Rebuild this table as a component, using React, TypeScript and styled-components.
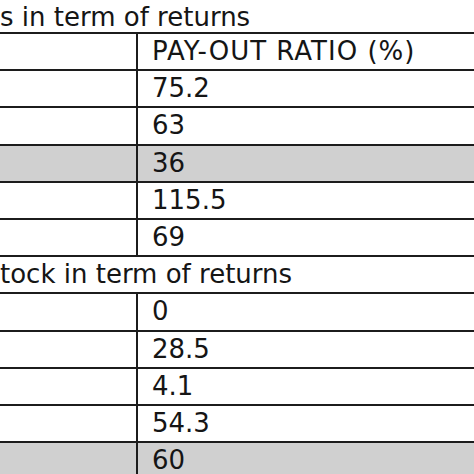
import styled, { createGlobalStyle } from "styled-components";

const GlobalStyle = createGlobalStyle`
  html, body {
    margin: 0;
    padding: 0;
    background: #ffffff;
  }
  body {
    font-family: "DejaVu Sans", Verdana, sans-serif;
    color: #151515;
  }
`;

const Sheet = styled.div`
  width: 474px;
  height: 474px;
  overflow: hidden;
  background: #ffffff;
`;

const CaptionRow = styled.div`
  height: 30px;
  padding-top: 2px;
  line-height: 30px;
  font-size: 26px;
  white-space: nowrap;
`;

const Row = styled.div<{ $shaded?: boolean }>`
  display: grid;
  grid-template-columns: 138px 1fr;
  height: 37.2px;
  box-sizing: border-box;
  border-top: 2px solid #1c1c1c;
  background: ${(p) => (p.$shaded ? "#d0d0d0" : "#ffffff")};
`;

const LabelCell = styled.div`
  border-right: 2px solid #1c1c1c;
`;

const ValueCell = styled.div<{ $wide?: boolean }>`
  padding-left: 14px;
  font-size: 26px;
  line-height: 35.2px;
  white-space: nowrap;
  letter-spacing: ${(p) => (p.$wide ? "1px" : "0")};
`;

const SectionRow = styled.div`
  height: 37.2px;
  box-sizing: border-box;
  border-top: 2px solid #1c1c1c;
  font-size: 26px;
  line-height: 35.2px;
  white-space: nowrap;
`;

type Item = { value: string; shaded?: boolean; wide?: boolean };

const first: Item[] = [
  { value: "PAY-OUT RATIO (%)", wide: true },
  { value: "75.2" },
  { value: "63" },
  { value: "36", shaded: true },
  { value: "115.5" },
  { value: "69" },
];

const second: Item[] = [
  { value: "0" },
  { value: "28.5" },
  { value: "4.1" },
  { value: "54.3" },
  { value: "60", shaded: true },
];

const App = () => {
  return (
    <>
      <GlobalStyle />
      <Sheet>
        <CaptionRow>s in term of returns</CaptionRow>
        {first.map((item, i) => (
          <Row key={"a" + i} $shaded={item.shaded}>
            <LabelCell />
            <ValueCell $wide={item.wide}>{item.value}</ValueCell>
          </Row>
        ))}
        <SectionRow>tock in term of returns</SectionRow>
        {second.map((item, i) => (
          <Row key={"b" + i} $shaded={item.shaded}>
            <LabelCell />
            <ValueCell>{item.value}</ValueCell>
          </Row>
        ))}
      </Sheet>
    </>
  );
};

export default App;
